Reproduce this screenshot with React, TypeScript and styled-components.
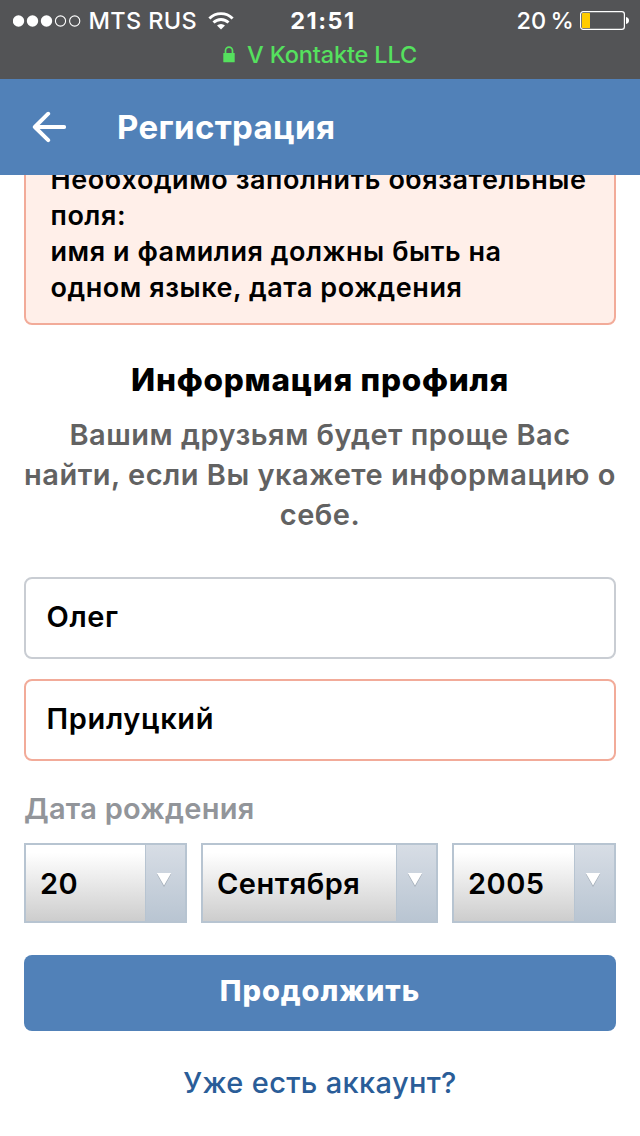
import React from "react";
import styled, { createGlobalStyle } from "styled-components";

const GlobalStyle = createGlobalStyle`
  * { box-sizing: border-box; }
  body {
    margin: 0;
    background: #fff;
    font-family: Inter, "Liberation Sans", sans-serif;
    -webkit-font-smoothing: antialiased;
  }
`;

const Screen = styled.div`
  width: 640px;
  height: 1136px;
  display: flex;
  flex-direction: column;
  overflow: hidden;
  background: #fff;
`;

const StatusBar = styled.div`
  height: 79px;
  flex: none;
  background: #535456;
  color: #fff;
`;

const StatusRow = styled.div`
  height: 40px;
  display: grid;
  grid-template-columns: 1fr auto 1fr;
  align-items: center;
  padding: 1px 11px 0 13px;
  font-size: 23.5px;
  font-weight: 550;
  white-space: nowrap;
`;

const StatusSide = styled.div<{ $end?: boolean }>`
  display: flex;
  align-items: center;
  justify-content: ${(p) => (p.$end ? "flex-end" : "flex-start")};
`;

const Carrier = styled.span`
  margin: 0 11px 0 6.5px;
  letter-spacing: 0.35px;
`;

const Clock = styled.span`
  position: relative;
  left: 2px;
  font-weight: 700;
  letter-spacing: 1.5px;
`;

const Percent = styled.span`
  letter-spacing: 0.2px;
  word-spacing: -2.5px;
  margin-right: 6px;
`;

const SiteRow = styled.div`
  height: 29px;
  display: flex;
  align-items: center;
  justify-content: center;
  gap: 12px;
  color: #55e15e;
  font-size: 23.5px;
  font-weight: 550;
  letter-spacing: -0.15px;
`;

const Header = styled.header`
  height: 96px;
  flex: none;
  display: flex;
  align-items: center;
  gap: 50px;
  padding-left: 32px;
  background: #5181b8;
  color: #fff;
`;

const Title = styled.h1`
  margin: 0;
  font-size: 33px;
  font-weight: 700;
  letter-spacing: 0.35px;
`;

const Content = styled.main`
  flex: 1;
  min-height: 0;
  overflow: hidden;
  display: flex;
  flex-direction: column;
  padding: 0 24px;
`;

const ErrorBox = styled.div`
  flex: none;
  margin-top: -34px;
  padding: 19px 24px 17px 24.5px;
  border: 2px solid #f2ab99;
  border-radius: 8px;
  background: #ffefe9;
  color: #000;
  font-size: 27px;
  line-height: 36px;
  font-weight: 600;
  letter-spacing: 0.55px;
`;

const Line = styled.div`
  white-space: nowrap;
`;

const Heading = styled.h2`
  margin: 35px 0 0;
  font-size: 31.5px;
  line-height: 40px;
  font-weight: 800;
  letter-spacing: 0.75px;
  text-align: center;
  color: #000;
`;

const Lead = styled.div`
  margin: 15px -10px 0;
  font-size: 29px;
  line-height: 40px;
  font-weight: 580;
  letter-spacing: 0.5px;
  text-align: center;
  color: #626262;
`;

const Field = styled.div<{ $invalid?: boolean }>`
  flex: none;
  height: 82px;
  margin-bottom: 20px;
  padding: 0 20.5px 3px;
  display: flex;
  align-items: center;
  border: 2px solid ${(p) => (p.$invalid ? "#f2ab99" : "#c9cdd3")};
  border-radius: 8px;
  font-size: 29px;
  font-weight: 600;
  letter-spacing: 0.65px;
  color: #000;
`;

const Fields = styled.div`
  margin-top: 42px;
`;

const Label = styled.div`
  margin-top: 8px;
  font-size: 29px;
  line-height: 40px;
  font-weight: 600;
  letter-spacing: 0.25px;
  color: #92959a;
`;

const DateRow = styled.div`
  margin-top: 14px;
  display: grid;
  grid-template-columns: 163px 237px 164px;
  gap: 14px;
`;

const Select = styled.div`
  height: 80px;
  display: flex;
  border: 2px solid #b7c4d1;
  background: linear-gradient(#fff 10%, #cdcdcd);
`;

const SelectValue = styled.div`
  flex: 1;
  display: flex;
  align-items: center;
  padding: 0 0 0 14px;
  font-size: 29px;
  font-weight: 600;
  letter-spacing: 0.5px;
  color: #000;
`;

const SelectArrow = styled.div`
  width: 40px;
  display: flex;
  justify-content: center;
  padding: 27px 3px 0 0;
  border-left: 1px solid #b7c4d1;
  background: linear-gradient(#d7dde5, #b9c5d2);
`;

const Submit = styled.div`
  flex: none;
  height: 76px;
  margin-top: 32px;
  padding-bottom: 5px;
  display: flex;
  align-items: center;
  justify-content: center;
  border-radius: 8px;
  background: #5181b8;
  color: #fff;
  font-size: 29px;
  font-weight: 800;
  letter-spacing: 0.95px;
`;

const LoginLink = styled.a`
  margin-top: 32px;
  font-size: 29px;
  line-height: 40px;
  font-weight: 550;
  letter-spacing: 0.35px;
  text-align: center;
  color: #2a5d98;
`;

const Signal = () => (
  <svg width="69" height="12" viewBox="0 0 69 12">
    {[5.5, 19.5, 33.5].map((x) => (
      <circle key={x} cx={x} cy="6" r="5.7" fill="#fff" />
    ))}
    {[47.5, 61.7].map((x) => (
      <circle key={x} cx={x} cy="6" r="5.1" fill="none" stroke="#fff" strokeWidth="1.1" />
    ))}
  </svg>
);

const Wifi = () => (
  <svg width="26" height="18" viewBox="0 0 26 18">
    <g fill="none" stroke="#fff" strokeWidth="2.9">
      <path d="M1.4 6.4a16.4 16.4 0 0 1 23.2 0" />
      <path d="M5.5 10.6a10.6 10.6 0 0 1 15 0" />
    </g>
    <path d="M13 17.6l-4-4a5.7 5.7 0 0 1 8 0z" fill="#fff" />
  </svg>
);

const Battery = () => (
  <svg width="49" height="19" viewBox="0 0 49 19">
    <rect x="0.6" y="0.6" width="43.8" height="17.8" rx="2.6" fill="none" stroke="#fff" strokeWidth="1.2" />
    <rect x="2" y="2" width="8" height="15" rx="0.6" fill="#fc0" />
    <path d="M46 6c2 .6 3 1.8 3 3.500s-1 2.900-3 3.500z" fill="#fff" />
  </svg>
);

const Lock = () => (
  <svg width="12" height="17" viewBox="0 0 12 17">
    <path d="M2.5 8V4.600a3.500 3.500 0 0 1 7 0V8" fill="none" stroke="#55e15e" strokeWidth="1.7" />
    <rect x="0.3" y="7" width="11.4" height="9.3" rx="0.5" fill="#55e15e" />
  </svg>
);

const BackArrow = () => (
  <svg width="35" height="32" viewBox="0 0 35 32">
    <path
      d="M32.200 16H3M16.200 2.700L2.800 16l13.400 13.200"
      fill="none"
      stroke="#fff"
      strokeWidth="3.9"
      strokeLinecap="round"
      strokeLinejoin="round"
    />
  </svg>
);

const Triangle = () => (
  <svg width="16" height="16" viewBox="0 0 16 16">
    <path d="M0.8 2h14.400L8 15z" fill="#9faab5" />
    <path d="M0.8 1h14.400L8 13.600z" fill="#fff" />
  </svg>
);

const dates = ["20", "Сентября", "2005"];

export default function App() {
  return (
    <Screen>
      <GlobalStyle />
      <StatusBar>
        <StatusRow>
          <StatusSide>
            <Signal />
            <Carrier>MTS RUS</Carrier>
            <Wifi />
          </StatusSide>
          <Clock>21:51</Clock>
          <StatusSide $end>
            <Percent>20 %</Percent>
            <Battery />
          </StatusSide>
        </StatusRow>
        <SiteRow>
          <Lock />
          <span>V Kontakte LLC</span>
        </SiteRow>
      </StatusBar>
      <Header>
        <BackArrow />
        <Title>Регистрация</Title>
      </Header>
      <Content>
        <ErrorBox>
          <Line>Необходимо заполнить обязательные</Line>
          <Line>поля:</Line>
          <Line>имя и фамилия должны быть на</Line>
          <Line>одном языке, дата рождения</Line>
        </ErrorBox>
        <Heading>Информация профиля</Heading>
        <Lead>
          <Line>Вашим друзьям будет проще Вас</Line>
          <Line>найти, если Вы укажете информацию о</Line>
          <Line>себе.</Line>
        </Lead>
        <Fields>
          <Field>
            <Line>Олег</Line>
          </Field>
          <Field $invalid>
            <Line>Прилуцкий</Line>
          </Field>
        </Fields>
        <Label>Дата рождения</Label>
        <DateRow>
          {dates.map((value) => (
            <Select key={value}>
              <SelectValue>
                <Line>{value}</Line>
              </SelectValue>
              <SelectArrow>
                <Triangle />
              </SelectArrow>
            </Select>
          ))}
        </DateRow>
        <Submit>Продолжить</Submit>
        <LoginLink>Уже есть аккаунт?</LoginLink>
      </Content>
    </Screen>
  );
}
